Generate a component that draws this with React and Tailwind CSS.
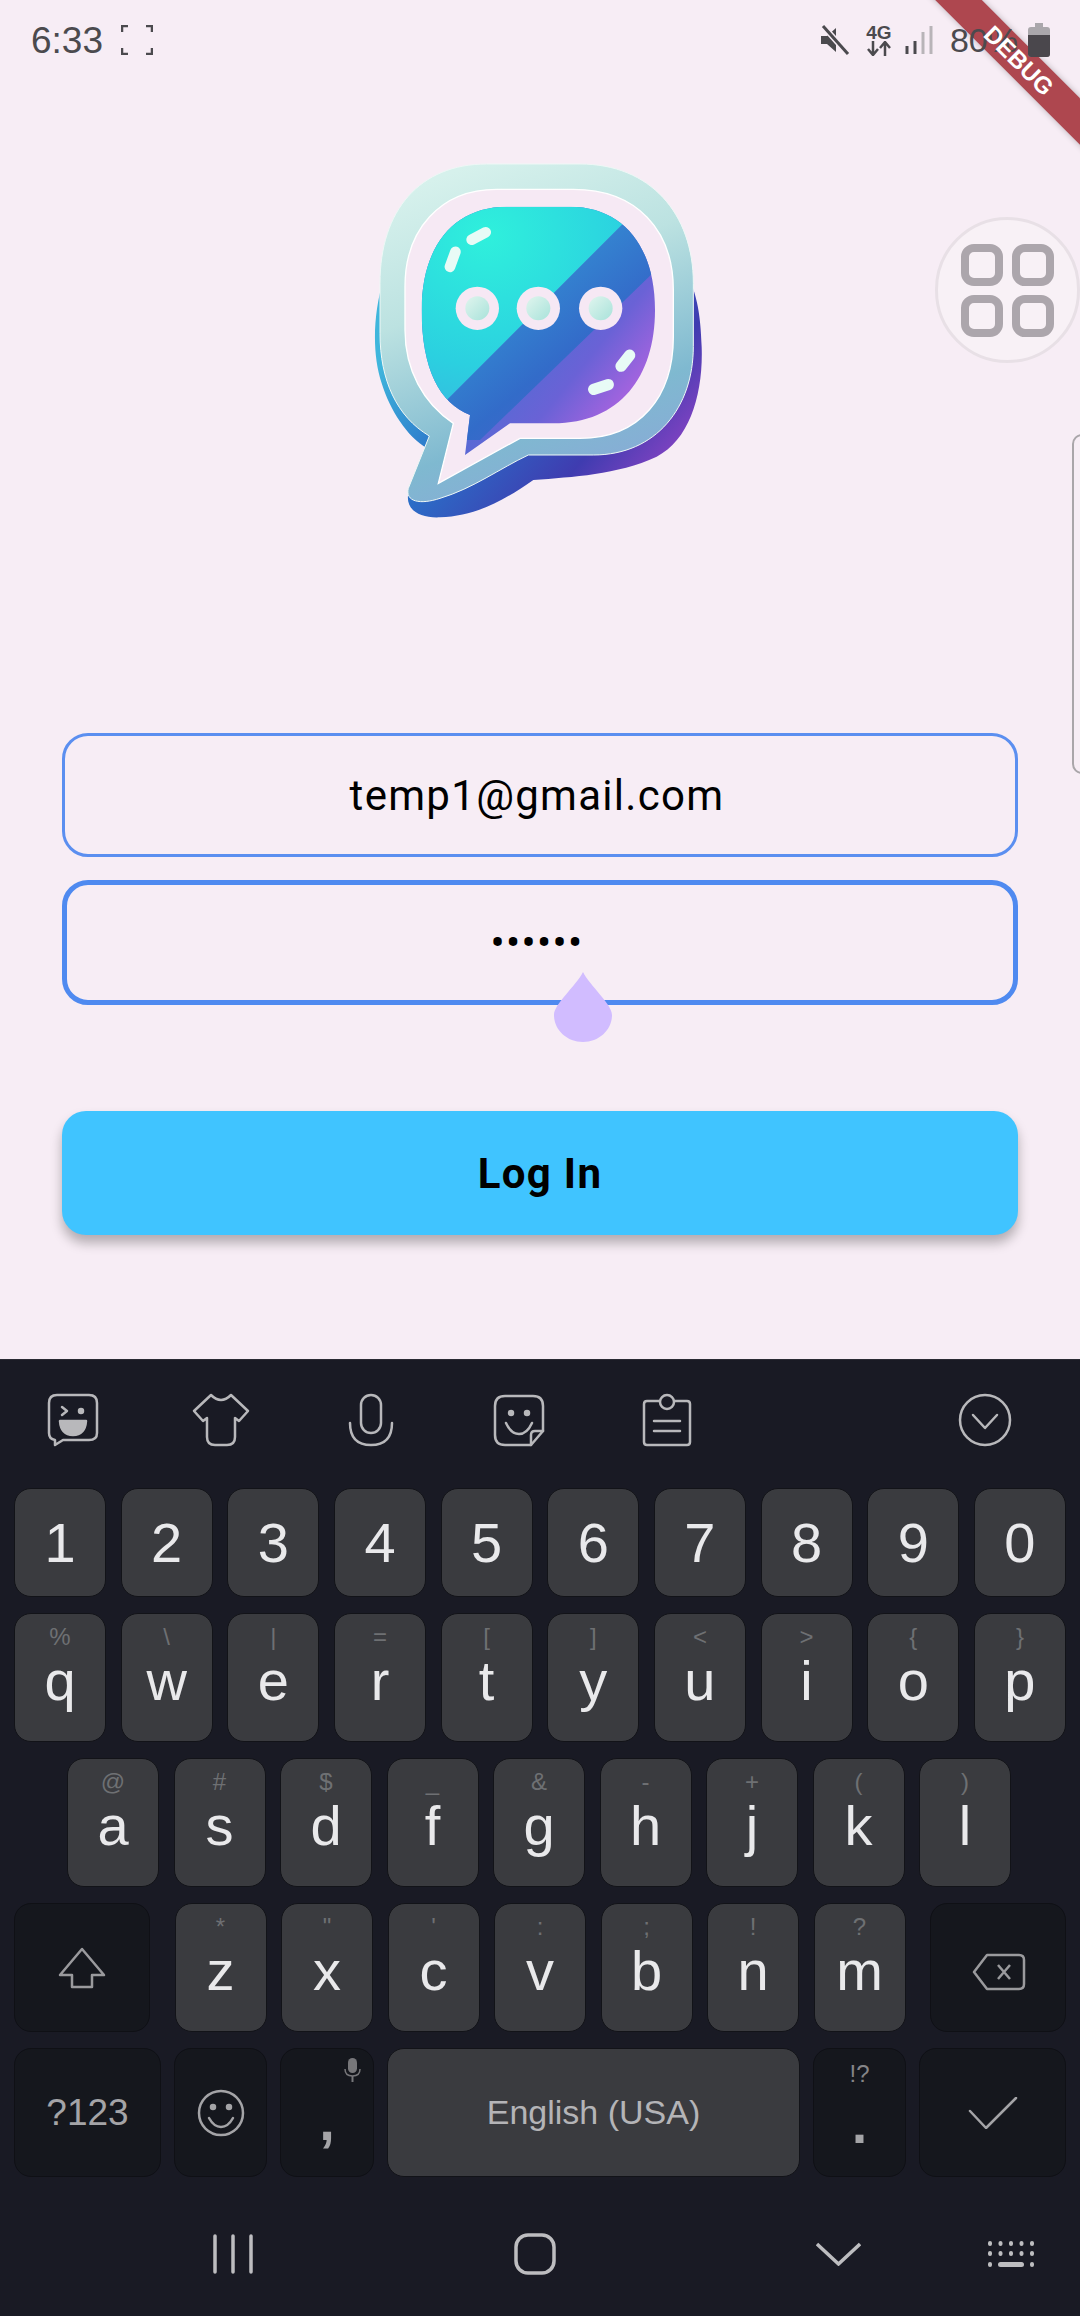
import React from 'react';

const numberRow = ['1', '2', '3', '4', '5', '6', '7', '8', '9', '0'];
const topRow = [['q', '%'], ['w', '\\'], ['e', '|'], ['r', '='], ['t', '['], ['y', ']'], ['u', '<'], ['i', '>'], ['o', '{'], ['p', '}']];
const middleRow = [['a', '@'], ['s', '#'], ['d', '$'], ['f', '_'], ['g', '&'], ['h', '-'], ['j', '+'], ['k', '('], ['l', ')']];
const bottomRow = [['z', '*'], ['x', '"'], ['c', "'"], ['v', ':'], ['b', ';'], ['n', '!'], ['m', '?']];

const sans = { fontFamily: '"Liberation Sans", Arial, sans-serif' };

const Logo = () => (
    <svg width="400" height="400" viewBox="0 0 1200 1200" className="block shrink-0">
        <defs>
            <linearGradient id="back" x1="0.05" y1="0.3" x2="0.95" y2="0.85">
                <stop offset="0" stopColor="#3fb6dc" />
                <stop offset="0.35" stopColor="#2a6fc8" />
                <stop offset="0.7" stopColor="#3f3cb0" />
                <stop offset="1" stopColor="#9a45c8" />
            </linearGradient>
            <linearGradient id="frame" x1="0.3" y1="0" x2="0.65" y2="1">
                <stop offset="0" stopColor="#d6f1ec" />
                <stop offset="0.35" stopColor="#bce2e1" />
                <stop offset="0.75" stopColor="#7fb9d0" />
                <stop offset="1" stopColor="#8aa8d8" />
            </linearGradient>
            <radialGradient id="tealFill" cx="0.3" cy="0.15" r="0.9">
                <stop offset="0" stopColor="#2ff0dc" />
                <stop offset="0.6" stopColor="#2bd0e0" />
                <stop offset="1" stopColor="#3ab0e0" />
            </radialGradient>
            <linearGradient id="midFill" x1="0" y1="0" x2="1" y2="1">
                <stop offset="0.2" stopColor="#35a0d8" />
                <stop offset="0.6" stopColor="#2f6cc8" />
                <stop offset="1" stopColor="#5a58d0" />
            </linearGradient>
            <linearGradient id="lowFill" x1="0.1" y1="0.2" x2="0.9" y2="0.85">
                <stop offset="0.3" stopColor="#3f74d2" />
                <stop offset="0.68" stopColor="#6a62d6" />
                <stop offset="1" stopColor="#c864e4" />
            </linearGradient>
            <linearGradient id="dotFill" x1="0" y1="0" x2="1" y2="1">
                <stop offset="0" stopColor="#e0f5ee" />
                <stop offset="1" stopColor="#a8e2da" />
            </linearGradient>
            <clipPath id="bubbleClip">
                <path d="M500 200 H690 C850 200 945 320 945 510 C945 710 840 850 640 850 H510 L375 945 L390 825 C300 790 245 690 245 510 C245 320 340 200 500 200 Z" />
            </clipPath>
        </defs>
        <path
            d="M130 420 C100 520 95 640 125 730 C150 810 200 890 262 925 L205 1060 C195 1110 240 1135 300 1132 C400 1128 480 1090 580 1020 C700 1010 830 1005 950 950 C1050 900 1090 760 1085 620 C1082 520 1070 470 1050 420 Z"
            fill="url(#back)"
        />
        <path
            d="M440 72 H720 C930 72 1060 220 1060 430 V620 C1060 800 950 945 760 945 H565 C480 985 400 1045 300 1075 C240 1095 195 1085 205 1045 L268 888 C170 830 120 720 120 580 V430 C120 210 240 72 440 72 Z"
            fill="url(#frame)"
            stroke="#eef8f6"
            strokeWidth="3"
        />
        <path
            d="M470 148 H700 C890 148 1000 270 1000 450 V590 C1000 770 900 895 720 895 H540 L295 1030 L340 850 C250 790 195 690 195 570 V440 C195 270 300 148 470 148 Z"
            fill="#f6e9f4"
            stroke="#ffffff"
            strokeWidth="4"
        />
        <g clipPath="url(#bubbleClip)">
            <rect x="200" y="180" width="800" height="800" fill="url(#lowFill)" />
            <polygon points="200,900 860,240 1000,240 1000,340 420,900" fill="url(#midFill)" opacity="0.92" />
            <polygon points="200,180 1000,180 860,240 330,770 200,900" fill="url(#tealFill)" />
        </g>
        {[412, 595, 782].map((cx) => (
            <g key={cx}>
                <circle cx={cx} cy="505" r="65" fill="#f6e8f4" />
                <circle cx={cx} cy="505" r="36" fill="url(#dotFill)" />
            </g>
        ))}
        <g fill="#e8fbf6">
            <rect x="376" y="272" width="80" height="32" rx="16" transform="rotate(-28 416 288)" />
            <rect x="298" y="342" width="80" height="32" rx="16" transform="rotate(-70 338 358)" />
            <rect x="818" y="645" width="76" height="34" rx="17" transform="rotate(-52 856 662)" />
            <rect x="743" y="724" width="80" height="34" rx="17" transform="rotate(-18 783 741)" />
        </g>
    </svg>
);

const MuteIcon = () => (
    <svg width="30" height="30" viewBox="0 0 30 30" fill="#4b4a4e">
        <path d="M1 11 H7 L16 3 V27 L7 19 H1 Z" />
        <path d="M3 1 L28 29" stroke="#f7edf5" strokeWidth="6" />
        <path d="M3 1 L28 29" stroke="#4b4a4e" strokeWidth="3" />
    </svg>
);

const SignalIcon = () => (
    <svg width="28" height="30" viewBox="0 0 28 30" fill="none" strokeWidth="3">
        <path d="M2 29 V21" stroke="#4b4a4e" />
        <path d="M10 29 V16" stroke="#4b4a4e" />
        <path d="M18 29 V7" stroke="#b8b4b8" />
        <path d="M26 29 V1" stroke="#b8b4b8" />
    </svg>
);

const BatteryIcon = () => (
    <svg width="22" height="34" viewBox="0 0 22 34">
        <path d="M7 0 H15 V5 H7 Z" fill="#aaa7ab" />
        <rect x="0" y="4" width="22" height="30" rx="3" fill="#aaa7ab" />
        <path d="M0 12 H22 V31 a3 3 0 0 1 -3 3 H3 a3 3 0 0 1 -3 -3 Z" fill="#4a474c" />
    </svg>
);

const ToolbarIcon = ({ w, children, className }) => (
    <svg
        width={w}
        height="54"
        viewBox={`0 0 ${w} 54`}
        fill="none"
        stroke="#b8b8bb"
        strokeWidth="2.5"
        strokeLinecap="round"
        strokeLinejoin="round"
        className={className}
    >
        {children}
    </svg>
);

const Key = ({ label, hint }) => (
    <div className="w-[92px] h-[129px] rounded-[17px] bg-[#3a3b3f] border border-[#121318] flex flex-col items-center text-[#e9e9eb]">
        <div className="mt-[8px] h-[30px] leading-[30px] text-[24px] text-[#6e7073]">{hint}</div>
        <div className="leading-[57px] text-[56px]">{label}</div>
    </div>
);

const FnKey = ({ className, children }) => (
    <div className={`relative h-[129px] rounded-[17px] bg-[#15171d] border border-[#0f1015] flex items-center justify-center ${className}`}>
        {children}
    </div>
);

const App = () => {
    return (
        <div className="relative w-[1080px] h-[2316px] overflow-hidden bg-[#f7edf5] flex flex-col" style={sans}>
            {/* Status bar */}
            <div className="relative z-10 h-[80px] flex items-center pl-[31px] text-[#4b4a4e]">
                <span className="text-[37px] leading-none">6:33</span>
                <svg width="32" height="30" viewBox="0 0 32 30" fill="none" stroke="#4b4a4e" strokeWidth="2.5" className="ml-[18px]">
                    <path d="M1 7 V1 H7 M25 1 H31 V7 M31 23 V29 H25 M7 29 H1 V23" />
                </svg>
                <div className="ml-auto mr-[30px] flex items-center">
                    <MuteIcon />
                    <div className="ml-[16px] w-[26px] flex flex-col items-center">
                        <span className="text-[19px] leading-[17px] font-bold">4G</span>
                        <svg width="26" height="15" viewBox="0 0 26 15" fill="none" stroke="#4b4a4e" strokeWidth="2.5">
                            <path d="M7 0 V13 M2 8 L7 14 L12 8 M19 15 V2 M14 7 L19 1 L24 7" />
                        </svg>
                    </div>
                    <div className="ml-[13px]"><SignalIcon /></div>
                    <span className="ml-[17px] text-[34px] leading-none">80%</span>
                    <div className="ml-[10px]"><BatteryIcon /></div>
                </div>
            </div>

            {/* Logo */}
            <div className="mt-[60px] flex justify-center">
                <Logo />
            </div>

            {/* Form */}
            <div className="mt-[193px] mx-[62px] flex flex-col font-['Roboto',sans-serif] text-black">
                <div className="h-[124px] rounded-[26px] border-[3px] border-[#5b8ff0] flex items-center justify-center pr-[6px] text-[42px] tracking-[1.3px]">
                    temp1@gmail.com
                </div>
                <div className="relative mt-[23px] h-[125px] rounded-[26px] border-[5px] border-[#4f8af0] flex items-center justify-center pr-[6px] text-[42px] tracking-[1.3px]">
                    ••••••
                    <svg width="58" height="70" viewBox="0 0 58 70" className="absolute left-[487px] top-[87px]">
                        <path d="M29 0 C36 14 58 32 58 43 C58 58 45 70 29 70 C13 70 0 58 0 43 C0 32 22 14 29 0 Z" fill="#d1bcff" />
                    </svg>
                </div>
                <div className="mt-[106px] h-[124px] rounded-[24px] bg-[#40c4ff] shadow-[0_8px_12px_rgba(0,0,0,0.28)] flex items-center justify-center text-[42px] font-bold tracking-[1.3px]">
                    Log In
                </div>
            </div>

            {/* Keyboard */}
            <div className="mt-[124px] flex-1 bg-[#191a24] border-t border-[#2a2b33] flex flex-col">
                <div className="h-[128px] flex items-center pl-[47px] pb-[9px]">
                    <ToolbarIcon w={52}>
                        <path d="M10 2 H42 Q50 2 50 10 V40 Q50 47 42 47 H16 L8 52 V47 Q2 46 2 40 V10 Q2 2 10 2 Z" />
                        <path d="M15 14 L20 18 L15 22" />
                        <circle cx="34" cy="18" r="2" fill="#b8b8bb" />
                        <path d="M13 28 H39 Q38 42 26 42 Q14 42 13 28 Z" fill="#b8b8bb" />
                    </ToolbarIcon>
                    <ToolbarIcon w={58} className="ml-[93px]">
                        <path d="M19 2 Q29 12 39 2 L56 18 L47 28 L43 25 V44 Q43 52 35 52 H23 Q15 52 15 44 V25 L11 28 L2 18 Z" />
                    </ToolbarIcon>
                    <ToolbarIcon w={46} className="ml-[98px]">
                        <rect x="13" y="2" width="20" height="38" rx="10" />
                        <path d="M2 30 Q2 52 23 52 Q44 52 44 30" />
                    </ToolbarIcon>
                    <ToolbarIcon w={52} className="ml-[99px]">
                        <path d="M12 3 H40 Q50 3 50 13 V38 L38 52 H12 Q2 52 2 42 V13 Q2 3 12 3 Z" />
                        <path d="M38 52 V42 Q38 38 42 38 H50" />
                        <circle cx="18" cy="20" r="2" fill="#b8b8bb" />
                        <circle cx="34" cy="20" r="2" fill="#b8b8bb" />
                        <path d="M13 30 Q18 41 26 41 Q34 41 39 30" />
                    </ToolbarIcon>
                    <ToolbarIcon w={50} className="ml-[97px]">
                        <path d="M17 8 H5 Q2 8 2 11 V49 Q2 52 5 52 H45 Q48 52 48 49 V11 Q48 8 45 8 H33" />
                        <circle cx="25" cy="9" r="7" />
                        <path d="M12 28 H38 M12 38 H38" />
                    </ToolbarIcon>
                    <ToolbarIcon w={54} className="ml-[266px]">
                        <circle cx="27" cy="27" r="25" />
                        <path d="M15 22 L27 35 L39 22" />
                    </ToolbarIcon>
                </div>

                <div className="px-[14px] flex justify-between">
                    {numberRow.map((n) => (
                        <div key={n} className="w-[92px] h-[109px] rounded-[17px] bg-[#3a3b3f] border border-[#121318] flex items-center justify-center text-[56px] text-[#e9e9eb]">
                            {n}
                        </div>
                    ))}
                </div>

                <div className="mt-[16px] px-[14px] flex justify-between">
                    {topRow.map(([l, h]) => <Key key={l} label={l} hint={h} />)}
                </div>

                <div className="mt-[16px] pl-[67px] pr-[69px] flex justify-between">
                    {middleRow.map(([l, h]) => <Key key={l} label={l} hint={h} />)}
                </div>

                <div className="mt-[16px] px-[14px] flex justify-between">
                    <FnKey className="w-[136px]">
                        <svg width="48" height="42" viewBox="0 0 48 42" fill="none" stroke="#9a9a9d" strokeWidth="2.5" strokeLinejoin="round">
                            <path d="M24 2 L46 28 H34 V40 H14 V28 H2 Z" />
                        </svg>
                    </FnKey>
                    <div className="w-[731px] flex justify-between">
                        {bottomRow.map(([l, h]) => <Key key={l} label={l} hint={h} />)}
                    </div>
                    <FnKey className="w-[136px]">
                        <svg width="54" height="38" viewBox="0 0 54 38" fill="none" stroke="#9a9a9d" strokeWidth="2.5" strokeLinejoin="round" className="mt-[8px] ml-[2px]">
                            <path d="M15 2 H47 Q52 2 52 7 V31 Q52 36 47 36 H15 L2 19 Z" />
                            <path d="M26 12 L38 26 M38 12 L26 26" />
                        </svg>
                    </FnKey>
                </div>

                <div className="mt-[16px] px-[14px] flex justify-between">
                    <FnKey className="w-[147px] text-[37px] text-[#a4a4a7]">?123</FnKey>
                    <FnKey className="w-[93px]">
                        <svg width="48" height="48" viewBox="0 0 48 48" fill="none" stroke="#a4a4a7" strokeWidth="2.5" strokeLinecap="round">
                            <circle cx="24" cy="24" r="22" />
                            <circle cx="16" cy="18" r="2" fill="#a4a4a7" />
                            <circle cx="32" cy="18" r="2" fill="#a4a4a7" />
                            <path d="M12 29 Q17 38 24 38 Q31 38 36 29" />
                        </svg>
                    </FnKey>
                    <FnKey className="w-[94px] text-[56px] font-bold text-[#a4a4a7]">
                        <span className="leading-none mt-[16px]">,</span>
                        <svg width="17" height="24" viewBox="0 0 17 24" className="absolute right-[12px] top-[9px]" fill="#77777a">
                            <rect x="4" y="0" width="9" height="15" rx="4.5" />
                            <path d="M1 11 Q1 18 8.500 18 Q16 18 16 11" fill="none" stroke="#77777a" strokeWidth="1.500" />
                            <path d="M7.500 18 H9.500 V24 H7.500 Z" />
                        </svg>
                    </FnKey>
                    <div className="w-[413px] h-[129px] rounded-[17px] bg-[#3a3b3f] border border-[#121318] flex items-center justify-center text-[34px] text-[#b4b4b7]">
                        English (USA)
                    </div>
                    <div className="w-[93px] h-[129px] rounded-[17px] bg-[#15171d] border border-[#0f1015] flex flex-col items-center text-[#858588]">
                        <span className="mt-[10px] text-[24px] leading-[30px]">!?</span>
                        <span className="mt-[7px] text-[56px] leading-[56px] font-bold text-[#a4a4a7]">.</span>
                    </div>
                    <FnKey className="w-[147px]">
                        <svg width="50" height="32" viewBox="0 0 50 32" fill="none" stroke="#a4a4a7" strokeWidth="2.5" strokeLinecap="round" strokeLinejoin="round">
                            <path d="M2 14 L18 31 L48 1" />
                        </svg>
                    </FnKey>
                </div>

                {/* Navigation bar */}
                <div className="flex-1 flex items-center pt-[15px] pl-[213px]">
                    <svg width="40" height="40" viewBox="0 0 40 40" stroke="#bdbdc0" strokeWidth="3.500" strokeLinecap="round">
                        <path d="M2 2 V38 M20 2 V38 M38 2 V38" />
                    </svg>
                    <svg width="42" height="42" viewBox="0 0 42 42" fill="none" stroke="#bdbdc0" strokeWidth="3.500" className="ml-[261px]">
                        <rect x="2" y="2" width="38" height="38" rx="12" />
                    </svg>
                    <svg width="45" height="24" viewBox="0 0 45 24" fill="none" stroke="#bdbdc0" strokeWidth="3.500" className="ml-[260px]">
                        <path d="M1 2 L22.500 22 L44 2" />
                    </svg>
                    <svg width="48" height="26" viewBox="0 0 48 26" fill="#bdbdc0" className="ml-[126px]">
                        {[0, 1, 2, 3, 4].map((i) => <rect key={`a${i}`} x={1 + i * 10.5} y="0" width="4" height="5" rx="2" />)}
                        {[0, 1, 2, 3, 4].map((i) => <rect key={`b${i}`} x={1 + i * 10.5} y="10" width="4" height="5" rx="2" />)}
                        <rect x="1" y="21" width="4" height="5" rx="2" />
                        <rect x="11" y="21" width="26" height="5" rx="2.500" />
                        <rect x="43" y="21" width="4" height="5" rx="2" />
                    </svg>
                </div>
            </div>

            {/* Floating tool button */}
            <div className="absolute left-[935px] top-[217px] w-[145px] h-[146px] rounded-full bg-[#f8f1f6] border-[3px] border-[#e8e0e6] grid grid-cols-[42px_42px] grid-rows-[42px_42px] gap-[9px] content-center justify-center">
                <div className="rounded-[13px] border-[8px] border-[#aca6ac]" />
                <div className="rounded-[13px] border-[8px] border-[#aca6ac]" />
                <div className="rounded-[13px] border-[8px] border-[#aca6ac]" />
                <div className="rounded-[13px] border-[8px] border-[#aca6ac]" />
            </div>

            {/* Side panel handle */}
            <div className="absolute left-[1072px] top-[434px] w-[12px] h-[340px] rounded-l-[10px] border-2 border-[#aaa6aa]" />

            {/* Debug banner: band under the status bar, label over it */}
            <div className="absolute left-[869px] top-[44px] w-[300px] h-[33px] rotate-45 bg-[#ae474f] shadow-[0_0_6px_rgba(0,0,0,0.25)]" />
            <div className="absolute z-20 left-[869px] top-[44px] w-[300px] h-[33px] rotate-45 flex items-center justify-center text-white font-bold text-[24px]">
                DEBUG
            </div>
        </div>
    );
};

export default App;
